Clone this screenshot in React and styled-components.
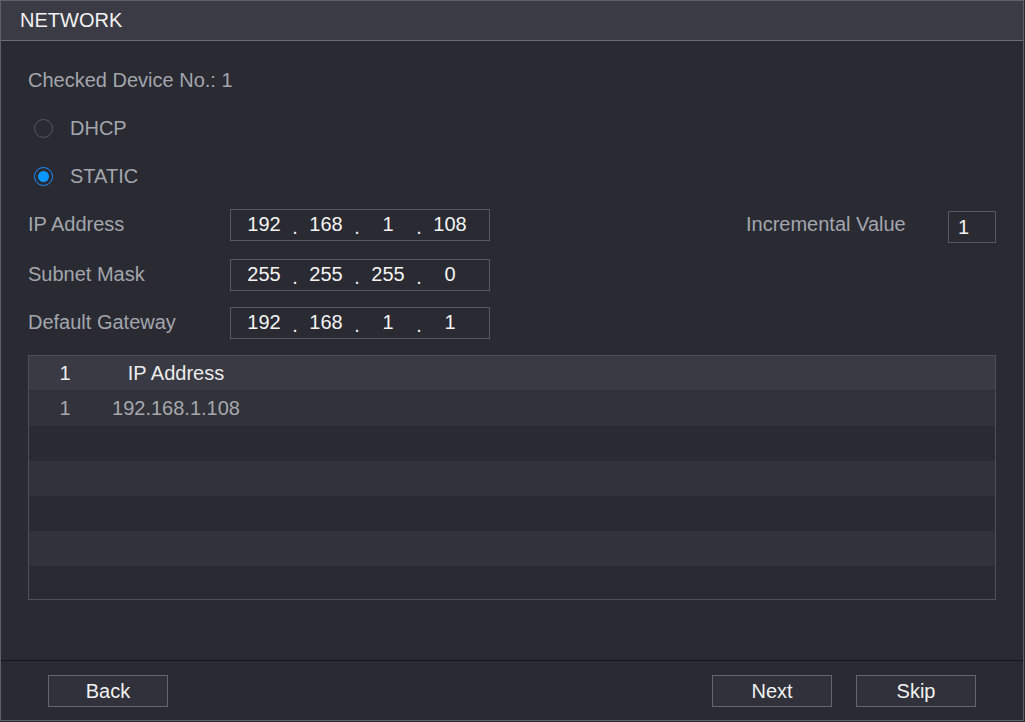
import React from "react";
import styled, { createGlobalStyle } from "styled-components";

const GlobalStyle = createGlobalStyle`
  html, body {
    margin: 0;
    padding: 0;
    background: #292a32;
    font-family: "Liberation Sans", Arial, sans-serif;
  }
  * { box-sizing: border-box; }
`;

const App = () => {
  const rows = ["192.168.1.108", "", "", "", "", ""];
  return (
    <>
      <GlobalStyle />
      <Window>
        <Header>NETWORK</Header>
        <Body>
          <InfoLine>Checked Device No.: 1</InfoLine>
          <RadioRow>
            <Radio />
            <RadioText>DHCP</RadioText>
          </RadioRow>
          <RadioRow>
            <Radio checked />
            <RadioText>STATIC</RadioText>
          </RadioRow>

          <FieldRow>
            <Label>IP Address</Label>
            <IpBox parts={["192", "168", "1", "108"]} />
            <Spacer />
            <Label>Incremental Value</Label>
            <SmallInput>1</SmallInput>
          </FieldRow>
          <FieldRow $shift>
            <Label>Subnet Mask</Label>
            <IpBox parts={["255", "255", "255", "0"]} />
          </FieldRow>
          <FieldRow>
            <Label>Default Gateway</Label>
            <IpBox parts={["192", "168", "1", "1"]} />
          </FieldRow>

          <Table>
            <HeadRow>
              <NumCell>1</NumCell>
              <IpCell>IP Address</IpCell>
            </HeadRow>
            {rows.map((ip, i) => (
              <Row key={i} $odd={i % 2 === 0}>
                <NumCell>{ip ? i + 1 : ""}</NumCell>
                <IpCell>{ip}</IpCell>
              </Row>
            ))}
          </Table>
        </Body>
        <Footer>
          <Button>Back</Button>
          <Spacer />
          <Button>Next</Button>
          <Button>Skip</Button>
        </Footer>
      </Window>
    </>
  );
};

const IpBox = ({ parts }) => (
  <IpField>
    {parts.map((p, i) => (
      <React.Fragment key={i}>
        {i > 0 && <Dot>.</Dot>}
        <Segment>{p}</Segment>
      </React.Fragment>
    ))}
  </IpField>
);

export default App;

const Window = styled.div`
  width: 1024px;
  height: 721px;
  display: flex;
  flex-direction: column;
  border: 1px solid #5d6069;
  background: #292a32;
  overflow: hidden;
`;

const Header = styled.div`
  height: 40px;
  flex: 0 0 auto;
  background: #3a3b44;
  border-bottom: 1px solid #6a6d75;
  color: #f2f2f2;
  font-size: 20px;
  line-height: 38px;
  padding-left: 19px;
`;

const Body = styled.div`
  flex: 1;
  padding: 15px 27px 0 27px;
  display: flex;
  flex-direction: column;
`;

const InfoLine = styled.div`
  height: 48px;
  line-height: 48px;
  font-size: 20px;
  color: #a3a6ad;
`;

const RadioRow = styled.div`
  height: 48px;
  display: flex;
  align-items: center;
  padding-left: 6px;
`;

const Radio = styled.span`
  width: 19px;
  height: 19px;
  border-radius: 50%;
  border: 1px solid ${(p) => (p.checked ? "#1b8fff" : "#55575f")};
  display: flex;
  align-items: center;
  justify-content: center;

  &::after {
    content: "";
    display: ${(p) => (p.checked ? "block" : "none")};
    width: 11px;
    height: 11px;
    border-radius: 50%;
    background: #0a98ff;
  }
`;

const RadioText = styled.span`
  margin-left: 17px;
  font-size: 20px;
  color: #a3a6ad;
`;

const FieldRow = styled.div`
  height: 49px;
  display: flex;
  align-items: center;
  padding-top: ${(p) => (p.$shift ? "2px" : "0")};
`;

const Label = styled.div`
  width: 202px;
  font-size: 20px;
  color: #a3a6ad;
  white-space: nowrap;
`;

const IpField = styled.div`
  width: 260px;
  height: 32px;
  border: 1px solid #575a62;
  display: flex;
  align-items: center;
  padding-left: 8px;
  color: #f4f4f4;
  font-size: 20px;
`;

const Segment = styled.span`
  width: 50px;
  text-align: center;
`;

const Dot = styled.span`
  width: 12px;
  text-align: center;
  position: relative;
  top: 3px;
`;

const Spacer = styled.div`
  flex: 1;
`;

const SmallInput = styled.div`
  width: 48px;
  height: 32px;
  margin-top: 4px;
  border: 1px solid #575a62;
  color: #f4f4f4;
  font-size: 20px;
  line-height: 30px;
  padding-left: 9px;
`;

const Table = styled.div`
  margin-top: 8px;
  width: 968px;
  border: 1px solid #4e5058;
  display: flex;
  flex-direction: column;
`;

const HeadRow = styled.div`
  height: 35px;
  display: flex;
  align-items: center;
  background: #393a43;
  color: #ececec;
  font-size: 20px;
  border-bottom: 1px dotted #24252b;
`;

const Row = styled.div`
  height: 35px;
  display: flex;
  align-items: center;
  background: ${(p) => (p.$odd ? "#31323a" : "#292a32")};
  color: #a6a8ae;
  font-size: 20px;

  &:last-child {
    height: 33px;
  }
`;

const NumCell = styled.div`
  width: 72px;
  text-align: center;
`;

const IpCell = styled.div`
  width: 150px;
  text-align: center;
`;

const Footer = styled.div`
  height: 60px;
  flex: 0 0 auto;
  border-top: 1px solid #15161a;
  display: flex;
  align-items: center;
  gap: 24px;
  padding: 0 47px 0 47px;
`;

const Button = styled.div`
  width: 120px;
  height: 32px;
  background: #30313a;
  border: 1px solid #62656d;
  color: #f2f2f2;
  font-size: 20px;
  line-height: 30px;
  text-align: center;
`;
